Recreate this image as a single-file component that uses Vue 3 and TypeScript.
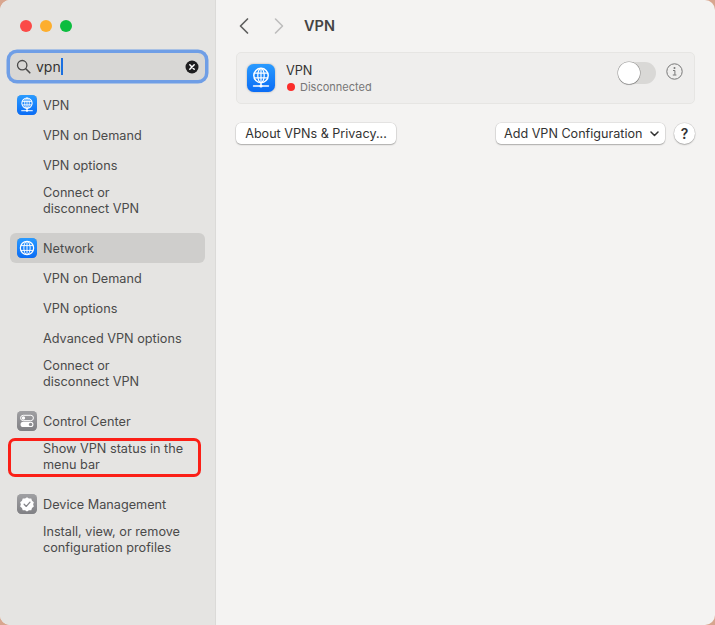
<script setup lang="ts">
type Item = { text: string; marked?: boolean }
type Group = { icon: 'vpn' | 'network' | 'control' | 'device'; label: string; active?: boolean; items: Item[] }

const groups: Group[] = [
  { icon: 'vpn', label: 'VPN', items: [
    { text: 'VPN on Demand' },
    { text: 'VPN options' },
    { text: 'Connect or\ndisconnect VPN' },
  ] },
  { icon: 'network', label: 'Network', active: true, items: [
    { text: 'VPN on Demand' },
    { text: 'VPN options' },
    { text: 'Advanced VPN options' },
    { text: 'Connect or\ndisconnect VPN' },
  ] },
  { icon: 'control', label: 'Control Center', items: [
    { text: 'Show VPN status in the\nmenu bar', marked: true },
  ] },
  { icon: 'device', label: 'Device Management', items: [
    { text: 'Install, view, or remove\nconfiguration profiles' },
  ] },
]
</script>

<template>
  <div class="window">
    <svg class="defs" width="0" height="0" aria-hidden="true">
      <defs>
        <linearGradient id="blue" x1="0" y1="0" x2="0" y2="1">
          <stop offset="0" stop-color="#2a9bff" />
          <stop offset="1" stop-color="#0a6cf5" />
        </linearGradient>
        <linearGradient id="gray" x1="0" y1="0" x2="0" y2="1">
          <stop offset="0" stop-color="#a0a0a3" />
          <stop offset="1" stop-color="#808084" />
        </linearGradient>
        <symbol id="icon-vpn" viewBox="0 0 28 28">
          <rect width="28" height="28" rx="6.5" fill="url(#blue)" />
          <g fill="none" stroke="#fff" stroke-width="1.2">
            <circle cx="14" cy="11.5" r="7.2" stroke-width="1.5" />
            <ellipse cx="14" cy="11.5" rx="3.2" ry="7.2" />
            <path d="M14 4.3v14.400M7.300 9.200h13.400M7.300 13.800h13.400" />
          </g>
          <path d="M14 18.5v3.2M6.5 22h15" fill="none" stroke="#fff" stroke-width="1.4" stroke-linecap="round" />
          <circle cx="14" cy="22" r="1.6" fill="#fff" />
        </symbol>
        <symbol id="icon-network" viewBox="0 0 28 28">
          <rect width="28" height="28" rx="6.5" fill="url(#blue)" />
          <g fill="none" stroke="#fff" stroke-width="1.3">
            <circle cx="14" cy="14" r="9.3" stroke-width="1.7" />
            <ellipse cx="14" cy="14" rx="4.4" ry="9.3" />
            <path d="M14 4.7v18.6M5.4 10.6h17.2M5.4 17.4h17.2" />
          </g>
        </symbol>
        <symbol id="icon-control" viewBox="0 0 28 28">
          <rect width="28" height="28" rx="6.5" fill="url(#gray)" />
          <rect x="5" y="6" width="18" height="7.5" rx="3.75" fill="none" stroke="#fff" stroke-width="1.4" />
          <circle cx="9" cy="9.75" r="2.4" fill="#fff" />
          <rect x="5" y="15" width="18" height="7.5" rx="3.75" fill="#fff" />
          <circle cx="19" cy="18.75" r="2.4" fill="#8b8b8f" />
        </symbol>
        <symbol id="icon-device" viewBox="0 0 28 28">
          <rect width="28" height="28" rx="6.5" fill="url(#gray)" />
          <path d="M14 4.5l2.7 1.9 3.3-.1 1 3.1 2.600 2-1 3.100 1 3.100-2.600 1.900-1 3.200-3.300-.1-2.700 1.900-2.700-1.900-3.300.1-1-3.200-2.600-1.900 1-3.100-1-3.100 2.600-2 1-3.100 3.300.1z" fill="#fff" />
          <path d="M10 14.400l3 3 5.200-6" fill="none" stroke="#85858a" stroke-width="1.8" stroke-linecap="round" stroke-linejoin="round" />
        </symbol>
      </defs>
    </svg>

    <aside class="sidebar">
      <div class="traffic">
        <span class="light red"></span>
        <span class="light amber"></span>
        <span class="light green"></span>
      </div>

      <div class="search">
        <svg class="search-icon" width="15" height="15" viewBox="0 0 15 15">
          <circle cx="6.200" cy="6.200" r="4.700" fill="none" stroke="#4a4a4a" stroke-width="1.300" />
          <path d="M9.800 9.800l4 4" stroke="#4a4a4a" stroke-width="1.600" stroke-linecap="round" />
        </svg>
        <span class="search-text">vpn</span><span class="caret"></span>
        <span class="clear">
          <svg width="14" height="14" viewBox="0 0 14 14">
            <circle cx="7" cy="7" r="6.500" fill="#1d1d1f" />
            <path d="M4.800 4.800l4.400 4.400M9.200 4.800l-4.400 4.400" stroke="#fff" stroke-width="1.500" stroke-linecap="round" />
          </svg>
        </span>
      </div>

      <nav class="results">
        <section v-for="group in groups" :key="group.label" class="group">
          <div class="group-head" :class="{ active: group.active }">
            <svg class="group-icon" width="20" height="20"><use :href="`#icon-${group.icon}`" /></svg>
            <span>{{ group.label }}</span>
          </div>
          <div v-for="item in group.items" :key="item.text" class="item" :class="{ two: item.text.includes('\n') }">
            <span class="item-text">{{ item.text }}</span>
            <span v-if="item.marked" class="marker"></span>
          </div>
        </section>
      </nav>
    </aside>

    <main class="content">
      <header class="toolbar">
        <svg class="chev" width="12" height="18" viewBox="0 0 12 18">
          <path d="M9.500 2L2.500 9l7 7" fill="none" stroke="#5f5f5f" stroke-width="1.700" stroke-linecap="round" stroke-linejoin="round" />
        </svg>
        <svg class="chev fwd" width="12" height="18" viewBox="0 0 12 18">
          <path d="M2.500 2l7 7-7 7" fill="none" stroke="#bdbdbd" stroke-width="1.600" stroke-linecap="round" stroke-linejoin="round" />
        </svg>
        <h1 class="title">VPN</h1>
      </header>

      <div class="card">
        <svg class="card-icon" width="28" height="28"><use href="#icon-vpn" /></svg>
        <div class="card-text">
          <div class="card-name">VPN</div>
          <div class="card-status"><span class="dot"></span>Disconnected</div>
        </div>
        <span class="toggle"><span class="knob"></span></span>
        <svg class="info" width="17" height="17" viewBox="0 0 17 17">
          <circle cx="8.500" cy="8.500" r="7.700" fill="none" stroke="#777" stroke-width="1" />
          <circle cx="8.500" cy="5" r="1" fill="#777" />
          <path d="M7 7.500h1.900v4.300M6.800 12h3.600" fill="none" stroke="#777" stroke-width="1" />
        </svg>
      </div>

      <div class="actions">
        <button class="btn about" type="button">About VPNs &amp; Privacy...</button>
        <button class="btn add" type="button">
          Add VPN Configuration
          <svg width="9" height="6" viewBox="0 0 9 6">
            <path d="M1 1l3.500 3.500L8 1" fill="none" stroke="#333" stroke-width="1.500" stroke-linecap="round" stroke-linejoin="round" />
          </svg>
        </button>
        <button class="help" type="button">?</button>
      </div>
    </main>
  </div>
</template>

<style>
html,
body {
  margin: 0;
  background: #d8a68f;
}
</style>

<style scoped>
.window {
  width: 715px;
  height: 625px;
  display: flex;
  border-radius: 10px;
  overflow: hidden;
  background: #f4f3f2;
  font-family: Inter, "Liberation Sans", sans-serif;
  font-size: 12.7px;
  color: #4a4a4a;
  -webkit-font-smoothing: antialiased;
}
.defs {
  position: absolute;
}
.sidebar {
  width: 216px;
  flex: none;
  box-sizing: border-box;
  background: #e5e4e2;
  border-right: 1px solid #dbdad8;
  padding: 20px 10px 0;
}
.traffic {
  display: flex;
  gap: 8px;
  padding-left: 10px;
}
.light {
  width: 12px;
  height: 12px;
  border-radius: 50%;
}
.red { background: #fb4a47; }
.amber { background: #fdae2d; }
.green { background: #0cbd3f; }

.search {
  margin-top: 21px;
  height: 27px;
  width: 195px;
  box-sizing: border-box;
  display: flex;
  align-items: center;
  padding: 0 6px 0 6px;
  background: #d8d7d5;
  border-radius: 7px;
  box-shadow: 0 0 0 3.500px #6f9ee6;
}
.search-icon {
  flex: none;
}
.search-text {
  margin-left: 5px;
  font-size: 14px;
  color: #333;
}
.caret {
  width: 2px;
  height: 17px;
  margin-left: 0;
  background: #1a6fe0;
}
.clear {
  margin-left: auto;
  display: flex;
}
.results {
  margin-top: 10px;
}
.group + .group {
  margin-top: 13px;
}
.group-head {
  height: 30px;
  display: flex;
  align-items: center;
  gap: 6px;
  padding-left: 7px;
  border-radius: 6px;
}
.group-head.active {
  background: #cfcecc;
}
.group-icon {
  flex: none;
  filter: drop-shadow(0 0.5px 0.5px rgba(0, 0, 0, 0.25));
}
.item {
  position: relative;
  height: 30px;
  box-sizing: border-box;
  display: flex;
  align-items: center;
  padding: 1px 0 0 33px;
}
.item.two {
  height: 40px;
}
.item-text {
  white-space: pre-line;
  line-height: 16px;
}
.marker {
  position: absolute;
  left: -2px;
  top: 2px;
  width: 193px;
  height: 39px;
  box-sizing: border-box;
  border: 3px solid #fb1f17;
  border-radius: 7px;
}

.content {
  flex: 1;
  min-width: 0;
  padding: 0 20px 0 20px;
  box-sizing: border-box;
}
.toolbar {
  height: 52px;
  box-sizing: border-box;
  display: flex;
  align-items: center;
  padding: 0 0 1px 2px;
}
.chev.fwd {
  margin-left: 23px;
}
.title {
  margin: 0 0 0 19px;
  font-size: 14.5px;
  font-weight: 600;
  color: #444;
}
.card {
  height: 52px;
  box-sizing: border-box;
  display: flex;
  align-items: flex-start;
  padding: 11px 11px 0 10px;
  background: #efeeed;
  border: 1px solid #e6e5e3;
  border-radius: 5px;
}
.card-icon {
  flex: none;
  filter: drop-shadow(0 0.5px 1px rgba(0, 0, 0, 0.25));
}
.card-text {
  margin: -1px 0 0 11px;
  flex: 1;
}
.card-name {
  line-height: 16px;
  color: #333;
}
.card-status {
  display: flex;
  align-items: center;
  font-size: 11px;
  line-height: 16px;
  color: #777;
}
.dot {
  width: 8px;
  height: 8px;
  border-radius: 50%;
  background: #fb2d2b;
  margin: 0 5px 0 1px;
}
.toggle {
  width: 38px;
  height: 22px;
  margin-top: -2px;
  border-radius: 11px;
  background: #d9d8d6;
  display: flex;
  flex: none;
}
.knob {
  width: 22px;
  height: 22px;
  box-sizing: border-box;
  border-radius: 50%;
  background: #fff;
  box-shadow: 0 0 0 0.5px rgba(0, 0, 0, 0.35), 0 1px 1px rgba(0, 0, 0, 0.2);
}
.info {
  flex: none;
  margin: -1.500px 0 0 10px;
}
.actions {
  margin-top: 19px;
  display: flex;
  align-items: center;
}
.btn,
.help {
  font-family: inherit;
  background: #fff;
  border: none;
  color: #333;
  box-shadow: 0 0 0 0.5px rgba(0, 0, 0, 0.12), 0 1px 1.500px rgba(0, 0, 0, 0.25);
  padding: 0;
}
.btn {
  height: 21px;
  font-size: 12.6px;
  border-radius: 5px;
}
.about {
  width: 160px;
}
.add {
  margin-left: auto;
  width: 169px;
  display: flex;
  align-items: center;
  justify-content: space-between;
  padding: 0 6px 0 8px;
  box-sizing: border-box;
}
.help {
  margin-left: 9px;
  width: 21px;
  height: 21px;
  flex: none;
  border-radius: 50%;
  font-size: 14px;
  font-weight: 600;
}
</style>
